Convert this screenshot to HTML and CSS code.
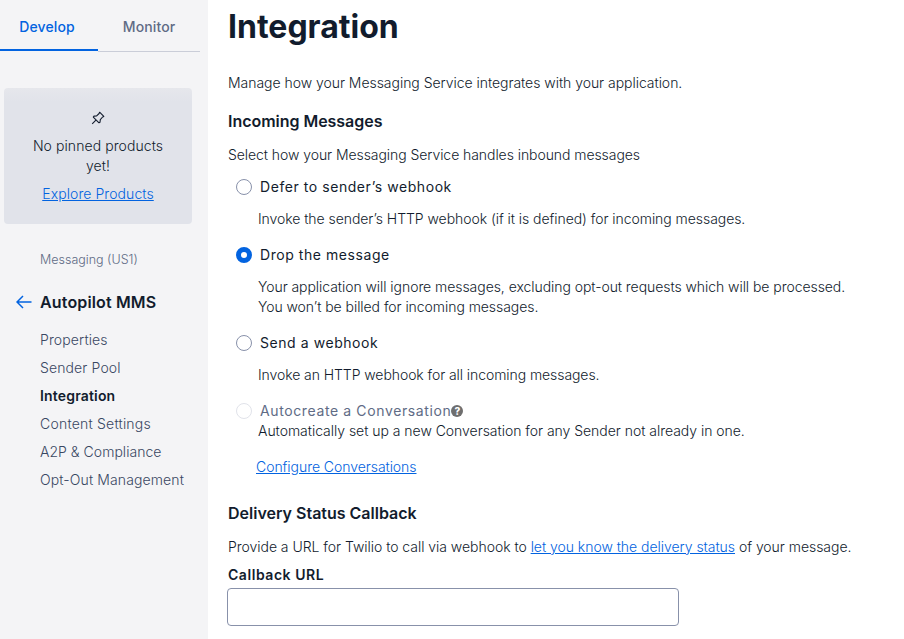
FILE: index.html
```html
<!DOCTYPE html>
<html lang="en">
<head>
<meta charset="utf-8">
<title>Integration</title>
<link rel="stylesheet" href="styles.css">
</head>
<body>
<aside class="sidebar">
  <nav class="tabs"><a class="tab active">Develop</a><a class="tab">Monitor</a></nav>
  <section class="pinned">
    <svg class="pin" viewBox="0 0 14 14" width="14" height="14"><path d="M8.6 1.2l4.2 4.2-1.2.6-2.3 2.6-.3 2.6-1 .6-5.7-5.7.7-1 2.6-.2L8.1 2.5zM4.9 9.1L1.2 12.8"/></svg>
    <p>No pinned products<br>yet!</p>
    <a class="link">Explore Products</a>
  </section>
  <div class="group">Messaging (US1)</div>
  <div class="service">
    <svg viewBox="0 0 16 14" width="16" height="14"><path d="M15.5 7H1M7 1L1 7l6 6"/></svg>
    <span>Autopilot MMS</span>
  </div>
  <ul class="menu">
    <li>Properties</li>
    <li>Sender Pool</li>
    <li class="current">Integration</li>
    <li class="wide">Content Settings</li>
    <li class="compact">A2P &amp; Compliance</li>
    <li>Opt-Out Management</li>
  </ul>
</aside>
<main class="content">
  <h1>Integration</h1>
  <p class="intro">Manage how your Messaging Service integrates with your application.</p>
  <h2 class="incoming">Incoming Messages</h2>
  <p class="select">Select how your Messaging Service handles inbound messages</p>
  <div class="option first"><i class="radio"></i><span>Defer to sender’s webhook</span></div>
  <p class="help">Invoke the sender’s HTTP webhook (if it is defined) for incoming messages.</p>
  <div class="option"><i class="radio checked"></i><span>Drop the message</span></div>
  <p class="help">Your application will ignore messages, excluding opt-out requests which will be processed.<br>You won’t be billed for incoming messages.</p>
  <div class="option"><i class="radio"></i><span>Send a webhook</span></div>
  <p class="help webhook">Invoke an HTTP webhook for all incoming messages.</p>
  <div class="option disabled"><i class="radio"></i><span>Autocreate a Conversation</span><i class="hint">?</i></div>
  <p class="help tight">Automatically set up a new Conversation for any Sender not already in one.</p>
  <p class="configure"><a class="link">Configure Conversations</a></p>
  <h2 class="delivery">Delivery Status Callback</h2>
  <p class="provide">Provide a URL for Twilio to call via webhook to <a class="link">let you know the delivery status</a> of your message.</p>
  <label class="url-label" for="callback">Callback URL</label>
  <input class="url" id="callback" type="text">
</main>
</body>
</html>
```

FILE: styles.css
```css
* { box-sizing: border-box; }
body { margin: 0; display: flex; width: 904px; height: 639px; overflow: hidden; background: #fff; color: #121c2d; font: 300 14px/20px Inter, "Liberation Sans", sans-serif; }
h1, h2, p, ul { margin: 0; padding: 0; }
.link { color: #0263e0; text-decoration: underline; }
.sidebar { width: 208px; flex: none; background: #f4f4f6; }
.tabs { display: flex; width: 200px; height: 52px; }
.tab { flex: 1; height: 52px; padding-top: 17px; text-align: center; font-weight: 500; letter-spacing: .12px; color: #606b85; border-bottom: 1px solid #cacdd8; }
.tab.active { flex: 0 0 98px; height: 51px; padding-right: 4px; color: #0263e0; border-bottom: 2px solid #0263e0; }
.pinned { width: 188px; height: 136px; margin: 36px 0 0 4px; padding-top: 23px; border-radius: 4px; background: linear-gradient(#e6e7ec, #e1e3ea 14px); text-align: center; letter-spacing: .08px; }
.pin { display: block; margin: 0 auto 11px; fill: none; stroke: #121c2d; stroke-width: 1.1; stroke-linejoin: round; }
.pinned p { margin-bottom: 8px; }
.group { margin: 26px 0 0 40px; font-size: 12.5px; color: #606b85; }
.service { display: flex; align-items: center; gap: 8px; margin: 20px 0 0 16px; height: 24px; font-size: 16px; font-weight: 600; letter-spacing: .15px; }
.service svg { fill: none; stroke: #0263e0; stroke-width: 1.5; }
.menu { margin: 12px 0 0 40px; list-style: none; color: #394762; font-weight: 350; letter-spacing: .12px; }
.menu li { height: 28px; padding-top: 4px; }
.menu .current { color: #121c2d; font-weight: 600; letter-spacing: .17px; }
.menu .wide { letter-spacing: .22px; }
.menu .compact { letter-spacing: .03px; }
.content { flex: 1; padding: 7px 0 0 20px; }
h1 { height: 40px; font-size: 32px; line-height: 40px; font-weight: 700; }
h2 { height: 24px; font-size: 16px; line-height: 24px; font-weight: 600; }
.intro { margin-top: 26px; letter-spacing: -.035px; }
.incoming { margin-top: 16px; letter-spacing: -.03px; }
.select { margin-top: 12px; letter-spacing: -.065px; }
.option { display: flex; align-items: center; height: 20px; margin: 16px 0 0 8px; font-weight: 400; letter-spacing: .56px; }
.option.first { margin-top: 12px; }
.radio { width: 16px; height: 16px; margin-right: 8px; border: 1px solid #8891aa; border-radius: 50%; }
.radio.checked { border: 5px solid #0263e0; }
.disabled { color: #606b85; letter-spacing: .62px; }
.disabled .radio { border-color: #e1e3ea; }
.hint { width: 12px; height: 12px; border-radius: 50%; background: #6e6e6e; color: #fff; font: 800 10px/12px Inter, sans-serif; letter-spacing: 0; text-align: center; }
.help { margin: 12px 0 0 30px; letter-spacing: -.055px; }
.help.webhook { letter-spacing: -.075px; }
.help.tight { margin-top: 0; letter-spacing: -.03px; }
.configure { margin: 16px 0 0 28px; letter-spacing: -.05px; }
.delivery { margin-top: 24px; }
.provide { margin-top: 12px; letter-spacing: -.035px; }
.url-label { display: block; margin-top: 8px; font-weight: 600; letter-spacing: .55px; }
.url { display: block; width: 452px; height: 38px; margin: 3px 0 0 -1px; border: 1px solid #8891aa; border-radius: 4px; background: #fff; }
```
